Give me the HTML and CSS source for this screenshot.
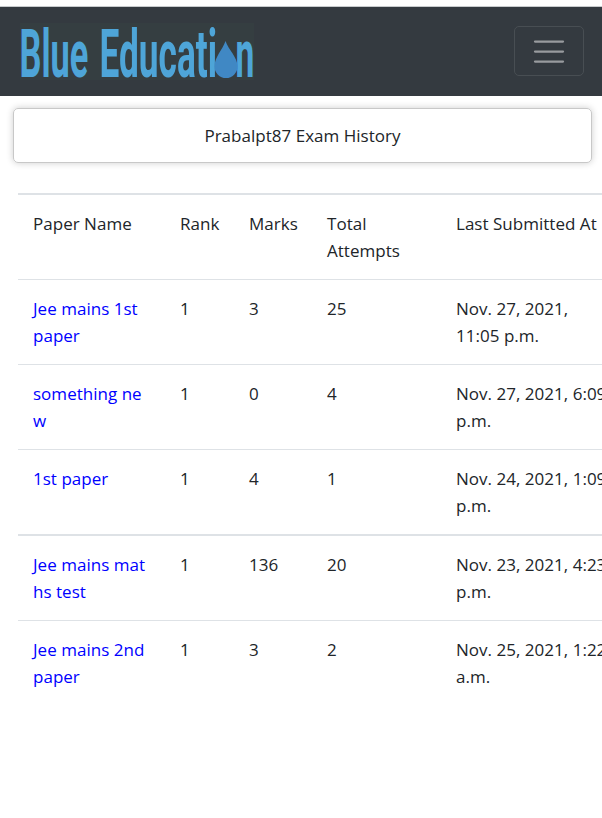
FILE: index.html
```html
<!DOCTYPE html>
<html lang="en">
<head>
<meta charset="utf-8">
<title>Exam History</title>
<link rel="stylesheet" href="styles.css">
</head>
<body>
<nav class="navbar">
  <a class="brand" href="#">
    <svg class="logo" width="234" height="57" viewBox="0 0 234 57">
      <g class="logo-text">
        <text transform="translate(-.5 54) scale(.513 1)">Blue</text>
        <text transform="translate(79.500 54) scale(.526 1)">Educati</text>
        <text transform="translate(215.500 54) scale(.5 1)">n</text>
      </g>
      <path class="drop" d="M205.500 18C202.500 27 194.500 34 194.500 43.500A11.500 11.500 0 0 0 217.500 43.500C217.500 34 208.500 27 205.500 18Z"/>
    </svg>
  </a>
  <button class="toggler" aria-label="Toggle navigation">
    <svg width="34" height="34" viewBox="0 0 34 34"><path class="bars" d="M3 7.500h28M3 17.500h28M3 27.500h28"/></svg>
  </button>
</nav>
<main>
  <div class="card">Prabalpt87 Exam History</div>
  <table class="history">
    <colgroup><col class="c-paper"><col class="c-rank"><col class="c-marks"><col class="c-total"><col class="c-date"></colgroup>
    <tbody>
      <tr class="thick"><td>Paper Name</td><td>Rank</td><td>Marks</td><td>Total<br>Attempts</td><td>Last Submitted At</td></tr>
      <tr><td><a href="#">Jee mains 1st<br>paper</a></td><td>1</td><td>3</td><td>25</td><td>Nov. 27, 2021,<br>11:05 p.m.</td></tr>
      <tr><td><a href="#">something ne<br>w</a></td><td>1</td><td>0</td><td>4</td><td>Nov. 27, 2021, 6:09<br>p.m.</td></tr>
      <tr><td><a href="#">1st paper</a></td><td>1</td><td>4</td><td>1</td><td>Nov. 24, 2021, 1:09<br>p.m.</td></tr>
    </tbody>
    <tbody>
      <tr class="thick"><td><a href="#">Jee mains mat<br>hs test</a></td><td>1</td><td>136</td><td>20</td><td>Nov. 23, 2021, 4:23<br>p.m.</td></tr>
      <tr><td><a href="#">Jee mains 2nd<br>paper</a></td><td>1</td><td>3</td><td>2</td><td>Nov. 25, 2021, 1:22<br>a.m.</td></tr>
    </tbody>
  </table>
</main>
</body>
</html>
```
FILE: styles.css
```css
* { box-sizing: border-box; }
html { overflow: hidden; }
body {
  margin: 0;
  padding-top: 6px;
  height: 818px;
  overflow: hidden;
  background: #fff;
  color: #212529;
  font: 400 17px/27px "Segoe UI", "Open Sans", "Noto Sans", sans-serif;
  letter-spacing: .02px;
}
a { color: #00f; text-decoration: none; }
.navbar {
  display: flex;
  align-items: flex-start;
  justify-content: space-between;
  height: 90px;
  padding: 17px 18px 0 20px;
  border-top: 1px solid #c8cbcd;
  background: #343a40;
  background-clip: padding-box;
}
.brand, .logo { display: block; }
.logo { overflow: visible; }
.brand { margin-top: -1px; background: #353e41; }
.logo-text {
  font: 700 67px Roboto, sans-serif;
  letter-spacing: 0;
  fill: #4ea5d8;
}
.drop { fill: #4088c4; }
.toggler {
  display: flex;
  align-items: center;
  justify-content: center;
  width: 70px;
  height: 50px;
  margin-top: 2px;
  padding: 0;
  border: 1px solid #484e53;
  border-radius: 5px;
  background: transparent;
}
.bars { fill: none; stroke: #989b9e; stroke-width: 2.250; stroke-linecap: round; }
.card {
  height: 55px;
  margin: 12px 10px 0 13px;
  padding-top: 13px;
  border: 1px solid #c8c8c8;
  border-radius: 5px;
  box-shadow: 0 0 7px rgba(0, 0, 0, .2);
  text-align: center;
}
.history {
  width: 600px;
  margin: 30px 0 0 18px;
  table-layout: fixed;
  border-collapse: separate;
  border-spacing: 0;
}
.c-paper { width: 147px; }
.c-rank { width: 69px; }
.c-marks { width: 78px; }
.c-total { width: 129px; }
.c-date { width: 177px; }
td {
  height: 85px;
  padding: 15px 0 15px 15px;
  border-top: 1px solid #dee2e6;
  vertical-align: top;
  white-space: nowrap;
}
.thick td { height: 86px; border-top-width: 2px; }
```
